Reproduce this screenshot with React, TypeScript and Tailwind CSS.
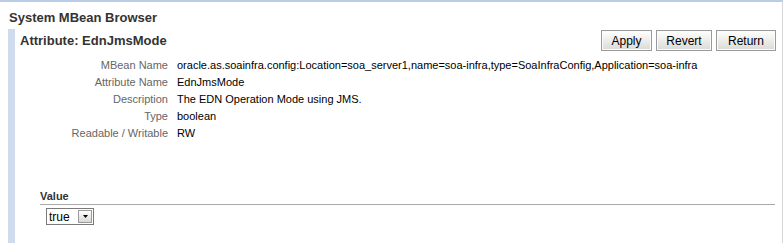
const rows = [
  {
    label: "MBean Name",
    value:
      "oracle.as.soainfra.config:Location=soa_server1,name=soa-infra,type=SoaInfraConfig,Application=soa-infra",
  },
  { label: "Attribute Name", value: "EdnJmsMode" },
  { label: "Description", value: "The EDN Operation Mode using JMS." },
  { label: "Type", value: "boolean" },
  { label: "Readable / Writable", value: "RW" },
];

function Btn({ label, width }: { label: string; width: string }) {
  return (
    <button
      className={`${width} h-[21px] border border-[#9a9a9a] bg-gradient-to-b from-white to-[#dadad6] text-[12px] text-black leading-none shadow-[inset_0_0_0_1px_#fbfbfb]`}
    >
      {label}
    </button>
  );
}

export default function App() {
  return (
    <div className="w-[783px] h-[243px] overflow-hidden bg-white border-t-2 border-t-[#b9cde6] border-r border-r-[#d6d6d6] font-['Liberation_Sans',Arial,sans-serif] text-[11px]">
      <div className="pl-[9px] pt-[7px] text-[13px] font-bold text-[#333] leading-[17px]">
        System MBean Browser
      </div>
      <div className="ml-[8px] mt-[3px] border-l-[7px] border-l-[#cfdcee] h-[220px]">
        <div className="flex items-start justify-between pl-[5px] pr-[6px]">
          <div className="pt-[3px] text-[13px] font-bold text-[#333] leading-[17px]">
            Attribute: EdnJmsMode
          </div>
          <div className="flex gap-[4px] pt-[1px]">
            <Btn label="Apply" width="w-[51px]" />
            <Btn label="Revert" width="w-[56px]" />
            <Btn label="Return" width="w-[60px]" />
          </div>
        </div>
        <div className="mt-[6px] grid grid-cols-[153px_1fr] gap-x-[9px] gap-y-0">
          {rows.map((r) => (
            <div key={r.label} className="contents">
              <div className="text-right text-[#666] leading-[17px]">{r.label}</div>
              <div className="text-black leading-[17px]">{r.value}</div>
            </div>
          ))}
        </div>
        <div className="ml-[25px] mr-[7px] mt-[47px]">
          <div className="text-[11px] font-bold text-[#333] leading-[14px] pb-[1px] border-b border-b-[#a9a9a9]">
            Value
          </div>
          <div className="ml-[6px] mt-[3px] flex items-center w-[48px] h-[17px] border border-[#7a7a7a] bg-white">
            <span className="flex-1 pl-[2px] text-[12px] text-black leading-none">true</span>
            <span className="w-[14px] h-[13px] mr-[1px] border border-[#9a9a9a] bg-gradient-to-b from-white to-[#d8d8d4] flex items-center justify-center">
              <svg width="5" height="3" viewBox="0 0 5 3">
                <path d="M0 0h5L2.5 3z" fill="#000" />
              </svg>
            </span>
          </div>
        </div>
      </div>
    </div>
  );
}
